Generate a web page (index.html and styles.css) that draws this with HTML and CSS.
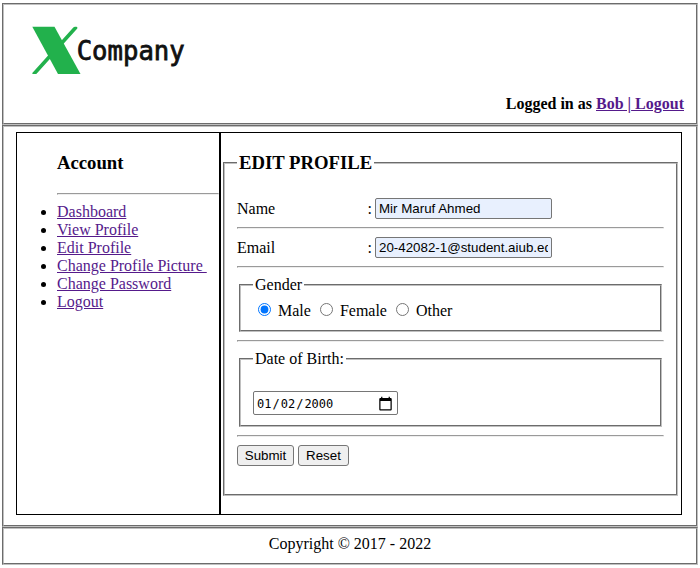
FILE: index.html
```html
<!DOCTYPE html>
<html lang="en">
<head>
<meta charset="utf-8">
<title>Edit Profile</title>
<link rel="stylesheet" href="styles.css">
</head>
<body>
<header class="panel header">
  <svg class="logo" width="160" height="56" viewBox="0 0 160 56" role="img" aria-label="X Company">
    <path class="mark" d="M2.300 50 L43.300 4.600 Q44 3.700 45 3.700 H46.500 Q47.800 4 47.300 5.500 L6.800 50.500 Q6.200 51 5.500 51 H3 Q2 51 2.300 50Z"/>
    <path class="mark" d="M2.300 3.700 H24.500 L50.500 51 H28Z"/>
    <text class="wordmark" x="46.700" y="37" textLength="108" lengthAdjust="spacingAndGlyphs">Company</text>
  </svg>
  <div class="session">Logged in as <a href="#">Bob |</a><a href="#"> Logout</a></div>
</header>
<main class="panel content">
  <div class="columns">
    <nav class="sidebar">
      <h3>Account</h3>
      <hr>
      <ul>
        <li><a href="#">Dashboard</a></li>
        <li><a href="#">View Profile</a></li>
        <li><a href="#">Edit Profile</a></li>
        <li><a href="#">Change Profile Picture&nbsp;</a></li>
        <li><a href="#">Change Password</a></li>
        <li><a href="#">Logout</a></li>
      </ul>
    </nav>
    <section class="profile">
      <form>
        <fieldset class="edit">
          <legend class="title">EDIT PROFILE</legend>
          <div class="row"><label for="name">Name</label><span class="colon">:</span><input class="field" id="name" type="text" value="Mir Maruf Ahmed"></div>
          <hr>
          <div class="row"><label for="email">Email</label><span class="colon">:</span><input class="field" id="email" type="text" value="20-42082-1@student.aiub.edu"></div>
          <hr>
          <fieldset class="group gender">
            <legend>Gender</legend>
            <label><input type="radio" name="gender" checked>Male</label>
            <label><input type="radio" name="gender">Female</label>
            <label><input type="radio" name="gender">Other</label>
          </fieldset>
          <hr>
          <fieldset class="group birth">
            <legend>Date of Birth:</legend>
            <input class="date" type="date" value="2000-01-02">
          </fieldset>
          <hr>
          <div class="actions">
            <button class="submit" type="submit">Submit</button>
            <button class="reset" type="reset">Reset</button>
          </div>
        </fieldset>
      </form>
    </section>
  </div>
</main>
<footer class="panel footer">Copyright © 2017 - 2022</footer>
</body>
</html>
```

FILE: styles.css
```css
* {
  box-sizing: border-box;
}

body {
  margin: 0;
  padding: 3px 2px;
  background: #fff;
  color: #000;
  font: 16px/18px "Liberation Serif", "Times New Roman", serif;
}

a {
  color: #551a8b;
  text-decoration: underline;
  white-space: pre;
}

hr {
  height: 2px;
  margin: 8px 0;
  border: 1px solid;
  border-color: #9a9a9a #eee #eee #9a9a9a;
}

.panel,
fieldset {
  border: 2px groove #c0c0c0;
}

.header {
  display: flex;
  flex-direction: column;
  justify-content: space-between;
  height: 122px;
  padding: 18px 12px 10px 26px;
}

.logo {
  display: block;
}

.mark {
  fill: #22b14c;
}

.wordmark {
  font: 26px "DejaVu Sans Mono", monospace;
  fill: #111;
  stroke: #111;
  stroke-width: 0.8px;
}

.session {
  font-weight: bold;
  text-align: right;
}

.content {
  height: 402px;
  padding: 5px 14px 10px 12px;
}

.columns {
  display: grid;
  grid-template-columns: 204px 1fr;
  height: 383px;
}

.sidebar,
.profile {
  border: 1px solid #000;
}

.sidebar {
  padding-left: 40px;
}

.sidebar h3 {
  margin: 19px 0;
  font-size: 18.72px;
  line-height: 22px;
}

.sidebar ul {
  margin: 0;
  padding: 0;
}

.profile {
  padding: 19px 3px 0 2px;
}

fieldset {
  margin: 0;
  min-width: 0;
}

legend {
  padding: 0 2px;
}

.edit {
  height: 344px;
  padding: 24px 12px 0;
}

.title {
  font-size: 18.72px;
  font-weight: bold;
  line-height: 22px;
}

.row {
  display: grid;
  grid-template-columns: 130.4px 7.6px 177px;
  align-items: center;
  height: 21px;
}

.field {
  width: 177px;
  height: 21px;
  padding: 1px 3px;
  border: 1px solid #767676;
  border-radius: 2px;
  background: #e8f0fe;
  font: 13.333px "Liberation Sans", Arial, sans-serif;
}

.group {
  margin: 0 2px;
  padding: 0 12px;
}

.gender {
  display: flex;
  height: 56px;
  padding-top: 8px;
}

.gender label {
  display: flex;
  margin-right: 4px;
}

.gender input {
  width: 13px;
  height: 13px;
  margin: 1px 7px 0 5px;
}

.birth {
  height: 77px;
  padding-top: 23px;
}

.date {
  display: block;
  width: 145px;
  height: 24px;
  padding: 1px 4px 0 2px;
  border: 1px solid #767676;
  border-radius: 2px;
  font: 12px "DejaVu Sans Mono", monospace;
}

.date::-webkit-calendar-picker-indicator {
  width: 15px;
  height: 15px;
  padding: 0;
  background-size: 15px 15px;
}

.actions {
  display: flex;
  gap: 4px;
}

button {
  height: 21px;
  padding: 0;
  border: 1px solid #767676;
  border-radius: 3px;
  background-color: #efefef;
  color: #000;
  font: 13.333px "Liberation Sans", Arial, sans-serif;
}

.submit {
  width: 57px;
}

.reset {
  width: 51px;
}

.footer {
  height: 38px;
  padding-top: 6px;
  text-align: center;
}
```
